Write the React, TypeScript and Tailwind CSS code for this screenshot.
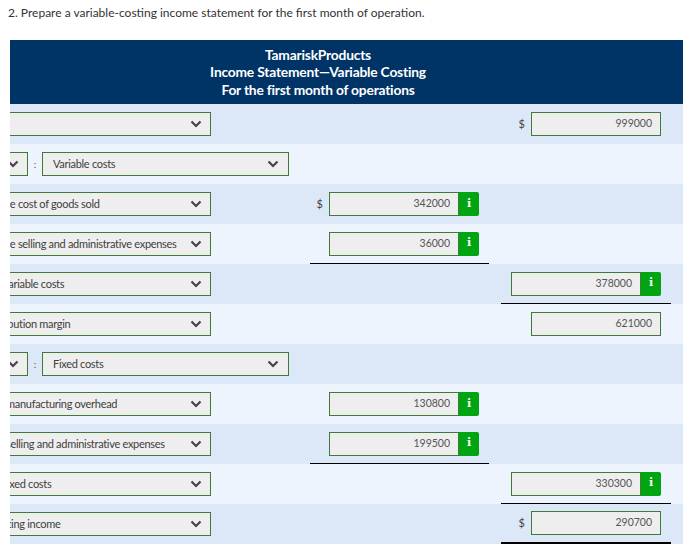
import { ReactNode } from 'react'

function Chevron() {
  return (
    <svg width="12" height="8" viewBox="0 0 12 8" className="flex-shrink-0">
      <path d="M1.5 1.5 L6 6 L10.5 1.5" fill="none" stroke="#444" strokeWidth="2.2" />
    </svg>
  )
}

function Select({ label = '', w, pr = 'pr-[8px]' }: { label?: string; w: string; pr?: string }) {
  return (
    <div
      className={`${w} h-[24px] flex items-center justify-between pl-[10px] ${pr} bg-[#eeeeee] border border-[#3f7a36] text-[11px] text-[#404040] tracking-[-0.3px] whitespace-nowrap overflow-hidden`}
    >
      <span>{label}</span>
      <Chevron />
    </div>
  )
}

function Amount({ value, info = false, dollar = false }: { value: string; info?: boolean; dollar?: boolean }) {
  return (
    <div className="flex items-center">
      {dollar && <span className="mr-[6px] text-[11px] text-[#444]">$</span>}
      <div className="w-[130px] h-[24px] flex items-center justify-end pr-[8px] bg-[#eeeeee] border border-[#3f7a36] text-[10.5px] text-[#555]">
        {value}
      </div>
      {info && (
        <div className="w-[20px] h-[24px] flex items-center justify-center bg-[#00a511] rounded-r-[2px] text-white text-[11px] font-bold font-['DejaVu_Serif',serif]">
          i
        </div>
      )}
    </div>
  )
}

type RowProps = {
  dark: boolean
  left: ReactNode
  mid?: ReactNode
  right?: ReactNode
  midLine?: boolean
  rightLine?: 'single' | 'double'
}

function Row({ dark, left, mid, right, midLine, rightLine }: RowProps) {
  return (
    <div className={`flex h-10 ${dark ? 'bg-[#dce7f7]' : 'bg-[#edf4fe]'}`}>
      <div className="w-[347px] flex items-center pl-[15px]">{left}</div>
      <div className="w-[200px] flex">
        <div
          className={`ml-[10px] w-[179px] h-10 flex items-center justify-end pr-[10px] ${midLine ? 'border-b border-black' : ''}`}
        >
          {mid}
        </div>
      </div>
      <div className="w-[183px] flex">
        <div
          className={`ml-[1px] w-[170px] h-10 flex items-center justify-end pr-[10px] ${
            rightLine === 'single' ? 'border-b border-black' : rightLine === 'double' ? 'border-b-2 border-black' : ''
          }`}
        >
          {right}
        </div>
      </div>
    </div>
  )
}

function Pair({ label }: { label: string }) {
  return (
    <div className="flex items-center">
      <Select w="w-[60px]" label="Less" pr="pr-[8px]" />
      <span className="w-[14px] text-center text-[10px] text-[#555]">:</span>
      <Select w="w-[247px]" label={label} pr="pr-[9px]" />
    </div>
  )
}

export default function App() {
  return (
    <div className="w-[694px] h-[555px] bg-white font-['Lato',sans-serif] overflow-hidden">
      <p className="pt-[5px] pl-[8px] text-[12px] text-[#333] leading-[15px]">
        2. Prepare a variable-costing income statement for the first month of operation.
      </p>

      <div className="mt-[20px] ml-[10px] w-[673px] overflow-hidden">
        <div className="w-[730px] ml-[-57px]">
          {/* Header */}
          <div className="h-[64px] bg-[#003366] flex flex-col items-center justify-center text-white font-bold text-[13.8px] leading-[17.5px] tracking-[-0.2px]">
            <p>TamariskProducts</p>
            <p>Income Statement—Variable Costing</p>
            <p>For the first month of operations</p>
          </div>

          <Row dark left={<Select w="w-[243px]" />} right={<Amount value="999000" dollar />} />
          <Row dark={false} left={<Pair label="Variable costs" />} />
          <Row
            dark
            left={<Select w="w-[243px]" label="Variable cost of goods sold" />}
            mid={<Amount value="342000" info dollar />}
          />
          <Row
            dark={false}
            left={<Select w="w-[243px]" label="Variable selling and administrative expenses" />}
            mid={<Amount value="36000" info />}
            midLine
          />
          <Row
            dark
            left={<Select w="w-[243px]" label="Total variable costs" />}
            right={<Amount value="378000" info />}
            rightLine="single"
          />
          <Row
            dark={false}
            left={<Select w="w-[243px]" label="Contribution margin" />}
            right={<Amount value="621000" />}
          />
          <Row dark left={<Pair label="Fixed costs" />} />
          <Row
            dark={false}
            left={<Select w="w-[243px]" label="Fixed manufacturing overhead" />}
            mid={<Amount value="130800" info />}
          />
          <Row
            dark
            left={<Select w="w-[243px]" label="Fixed selling and administrative expenses" />}
            mid={<Amount value="199500" info />}
            midLine
          />
          <Row
            dark={false}
            left={<Select w="w-[243px]" label="Total fixed costs" />}
            right={<Amount value="330300" info />}
            rightLine="single"
          />
          <Row
            dark
            left={<Select w="w-[243px]" label="Operating income" />}
            right={<Amount value="290700" dollar />}
            rightLine="double"
          />
        </div>
      </div>
    </div>
  )
}
